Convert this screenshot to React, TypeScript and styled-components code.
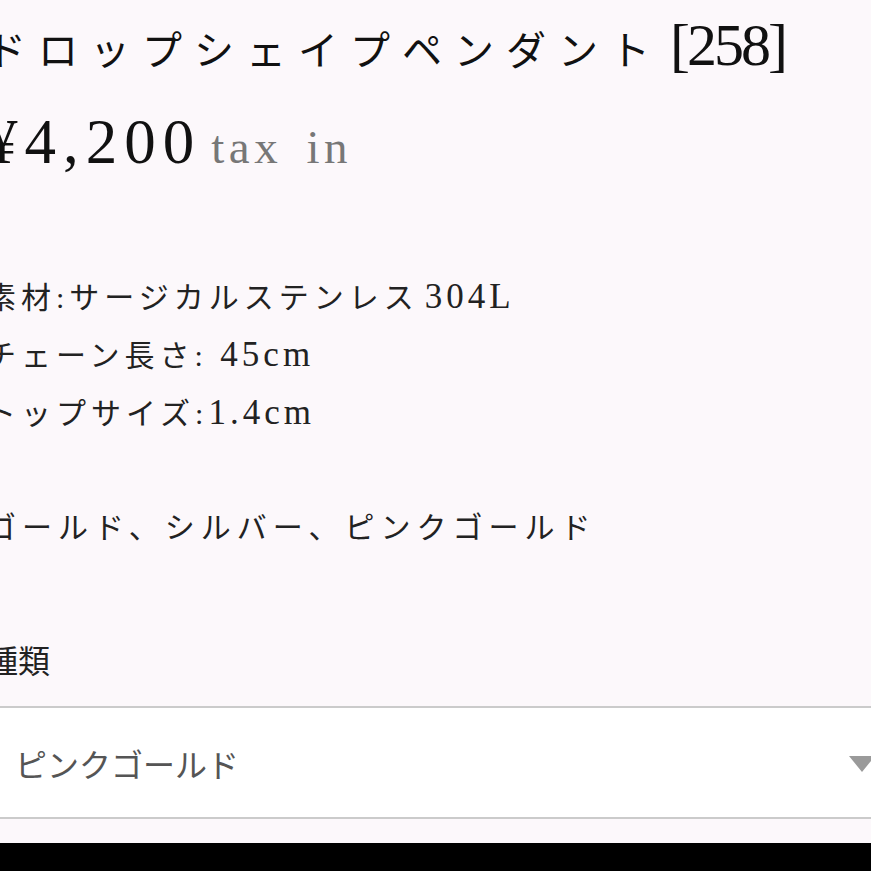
import React from 'react';
import styled, { createGlobalStyle } from 'styled-components';

const GlobalStyle = createGlobalStyle`
  html, body {
    margin: 0;
    padding: 0;
    background: #fcf8fb;
    overflow: hidden;
  }
  body {
    font-family: 'Liberation Serif', 'Noto Sans CJK JP', serif;
    color: #1a1a1a;
  }
`;

const specs: { label: string; value?: string; gap?: number; spacing?: number }[] = [
  { label: '素材:サージカルステンレス', value: '304L', gap: 6 },
  { label: 'チェーン長さ: ', value: '45cm' },
  { label: 'トップサイズ:', value: '1.4cm' },
  { label: '' },
  { label: 'ゴールド、シルバー、ピンクゴールド', spacing: 6 },
];

const App: React.FC = () => {
  return (
    <>
      <GlobalStyle />
      <Page>
        <Content>
          <Title>
            ドロップシェイプペンダント
            <TitleCode>[258]</TitleCode>
          </Title>

          <PriceRow>
            <Amount>¥4,200</Amount>
            <TaxNote>tax in</TaxNote>
          </PriceRow>

          <SpecList>
            {specs.map((s, i) => (
              <SpecLine key={i} $spacing={s.spacing}>
                {s.label}
                {s.value && <SpecNum $gap={s.gap}>{s.value}</SpecNum>}
              </SpecLine>
            ))}
          </SpecList>

          <OptionLabel>種類</OptionLabel>
          <SelectBox>
            <SelectValue>ピンクゴールド</SelectValue>
            <SelectArrow />
          </SelectBox>
        </Content>
        <NavBar />
      </Page>
    </>
  );
};

// Styled Components

const Page = styled.div`
  display: flex;
  flex-direction: column;
  height: 871px;
  overflow: hidden;
`;

const Content = styled.main`
  flex: 1;
  display: flex;
  flex-direction: column;
  align-items: flex-start;
  margin-left: -14px;
  padding-top: 13px;
  overflow: hidden;
`;

const Title = styled.h1`
  margin: 0;
  font-family: 'Liberation Serif', 'Noto Sans CJK JP', serif;
  font-weight: 400;
  font-size: 40px;
  line-height: 64px;
  letter-spacing: 12px;
  color: #111;
  white-space: nowrap;
`;

const TitleCode = styled.span`
  font-size: 60px;
  letter-spacing: -3px;
  margin-left: 8px;
`;

const PriceRow = styled.div`
  display: flex;
  align-items: baseline;
  margin-top: 27px;
  white-space: nowrap;
`;

const Amount = styled.span`
  font-size: 63px;
  line-height: 1;
  letter-spacing: 7px;
  color: #111;
`;

const TaxNote = styled.span`
  font-size: 47px;
  line-height: 1;
  letter-spacing: 4.5px;
  word-spacing: 8px;
  color: #777;
  margin-left: 10px;
`;

const SpecList = styled.div`
  display: flex;
  flex-direction: column;
  margin-top: 94px;
`;

const SpecLine = styled.div<{ $spacing?: number }>`
  min-height: 57px;
  font-size: 30px;
  line-height: 57px;
  letter-spacing: ${({ $spacing }) => $spacing ?? 5}px;
  color: #222;
  white-space: nowrap;
`;

const SpecNum = styled.span<{ $gap?: number }>`
  font-size: 35px;
  letter-spacing: 4px;
  margin-left: ${({ $gap }) => $gap ?? 0}px;
`;

const OptionLabel = styled.div`
  margin-top: 86px;
  font-size: 32px;
  line-height: 40px;
  color: #222;
`;

const SelectBox = styled.div`
  box-sizing: border-box;
  display: flex;
  align-items: center;
  justify-content: space-between;
  width: 912px;
  height: 113px;
  margin-top: 24px;
  padding: 0 23px 0 29px;
  background: #fff;
  border-top: 2px solid #cbcbcb;
  border-bottom: 2px solid #cbcbcb;
`;

const SelectValue = styled.span`
  font-family: 'Noto Sans CJK JP', sans-serif;
  font-size: 32px;
  color: #555;
`;

const SelectArrow = styled.span`
  width: 0;
  height: 0;
  border-left: 13px solid transparent;
  border-right: 13px solid transparent;
  border-top: 16px solid #9a9a9a;
  margin-top: 2px;
`;

const NavBar = styled.footer`
  flex: none;
  height: 28px;
  background: #000;
`;

export default App;
